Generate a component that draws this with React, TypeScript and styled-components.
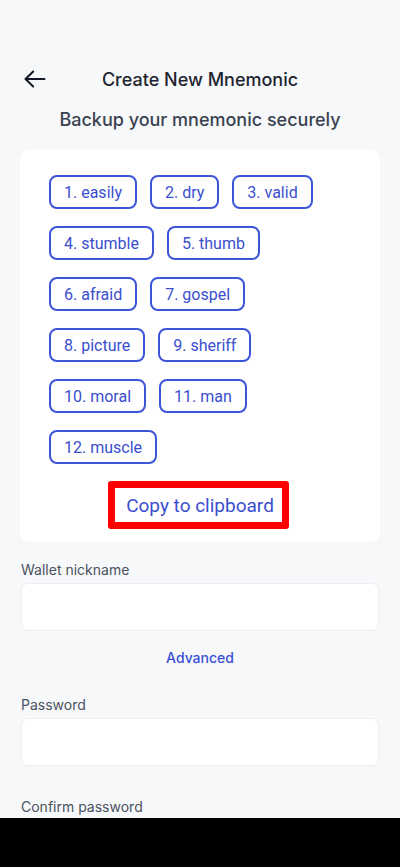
import React from "react";
import styled, { createGlobalStyle } from "styled-components";

const Global = createGlobalStyle`
  html, body { margin: 0; padding: 0; background: #f7f8fa; }
  * { box-sizing: border-box; }
`;

const Screen = styled.div`
  width: 400px;
  height: 867px;
  display: flex;
  flex-direction: column;
  background: #f7f8fa;
  overflow: hidden;
`;

const Content = styled.main`
  flex: 1;
  min-height: 0;
  overflow: hidden;
  display: flex;
  flex-direction: column;
  padding: 56px 20px 0;
  & > * { flex-shrink: 0; }
`;

const Header = styled.header`
  height: 46px;
  display: grid;
  grid-template-columns: 40px 1fr 40px;
  align-items: center;
`;

const BackButton = styled.button`
  border: none;
  background: none;
  padding: 0;
  width: 26px;
  height: 26px;
  display: flex;
  align-items: center;
  justify-content: center;
  color: #111827;
  margin-left: 2px;
`;

const Title = styled.h1`
  margin: 0;
  text-align: center;
  font-family: Inter, "Noto Sans", sans-serif;
  font-size: 18px;
  font-weight: 500;
  color: #1f2430;
`;

const Subtitle = styled.p`
  margin: 6px 0 18px;
  text-align: center;
  font-family: Inter, "Noto Sans", sans-serif;
  font-size: 18px;
  line-height: 24px;
  font-weight: 500;
  color: #3a4250;
`;

const Card = styled.section`
  background: #ffffff;
  border-radius: 9px;
  padding: 25px 29px 13px;
  display: flex;
  flex-direction: column;
  align-items: center;
`;

const WordGrid = styled.div`
  align-self: stretch;
  display: flex;
  flex-wrap: wrap;
  column-gap: 13px;
  row-gap: 17px;
`;

const Chip = styled.span`
  height: 34px;
  padding: 0 13px;
  border: 2px solid #3d55d9;
  border-radius: 8px;
  display: inline-flex;
  align-items: center;
  font-family: Roboto, "Noto Sans", sans-serif;
  font-size: 16px;
  font-weight: 400;
  color: #3a4ecf;
`;

const CopyButton = styled.button`
  margin-top: 17px;
  margin-left: -4px;
  width: 181px;
  height: 48px;
  border: 7.5px solid #ff0000;
  border-radius: 3px;
  background: #ffffff;
  font-family: Roboto, "Noto Sans", sans-serif;
  font-size: 19px;
  font-weight: 400;
  color: #3a4ecf;
  padding: 0 0 0 4px;
  display: flex;
  align-items: center;
  justify-content: center;
`;

const FieldLabel = styled.label<{ $top: number }>`
  display: block;
  margin-top: ${(p) => p.$top}px;
  margin-bottom: 3px;
  padding-left: 1px;
  font-family: Inter, "Noto Sans", sans-serif;
  font-size: 14px;
  line-height: 20px;
  color: #4b5260;
`;

const Input = styled.input`
  width: 358px;
  height: 48px;
  margin-left: 1px;
  border: 1px solid #eceef1;
  border-radius: 7px;
  background: #ffffff;
  outline: none;
`;

const AdvancedLink = styled.button`
  align-self: center;
  margin-top: 17px;
  border: none;
  background: none;
  padding: 0;
  font-family: Inter, "Noto Sans", sans-serif;
  font-size: 14px;
  line-height: 20px;
  font-weight: 500;
  color: #3a50d8;
`;

const NavBar = styled.div`
  height: 49px;
  flex-shrink: 0;
  background: #000000;
`;

const words = [
  "easily", "dry", "valid", "stumble", "thumb", "afraid",
  "gospel", "picture", "sheriff", "moral", "man", "muscle",
];

export default function App() {
  return (
    <>
      <Global />
      <Screen>
        <Content>
          <Header>
            <BackButton aria-label="Back">
              <svg width="22" height="18" viewBox="0 0 22 18" fill="none" stroke="#111827" strokeWidth="2" strokeLinecap="round" strokeLinejoin="round">
                <path d="M20.5 9H1.8" />
                <path d="M9.2 1.5L1.5 9l7.7 7.5" />
              </svg>
            </BackButton>
            <Title>Create New Mnemonic</Title>
            <span />
          </Header>
          <Subtitle>Backup your mnemonic securely</Subtitle>
          <Card>
            <WordGrid>
              {words.map((w, i) => (
                <Chip key={w}>{`${i + 1}. ${w}`}</Chip>
              ))}
            </WordGrid>
            <CopyButton>Copy to clipboard</CopyButton>
          </Card>
          <FieldLabel $top={18}>Wallet nickname</FieldLabel>
          <Input />
          <AdvancedLink>Advanced</AdvancedLink>
          <FieldLabel $top={27}>Password</FieldLabel>
          <Input type="password" />
          <FieldLabel $top={31}>Confirm password</FieldLabel>
          <Input type="password" />
        </Content>
        <NavBar />
      </Screen>
    </>
  );
}
